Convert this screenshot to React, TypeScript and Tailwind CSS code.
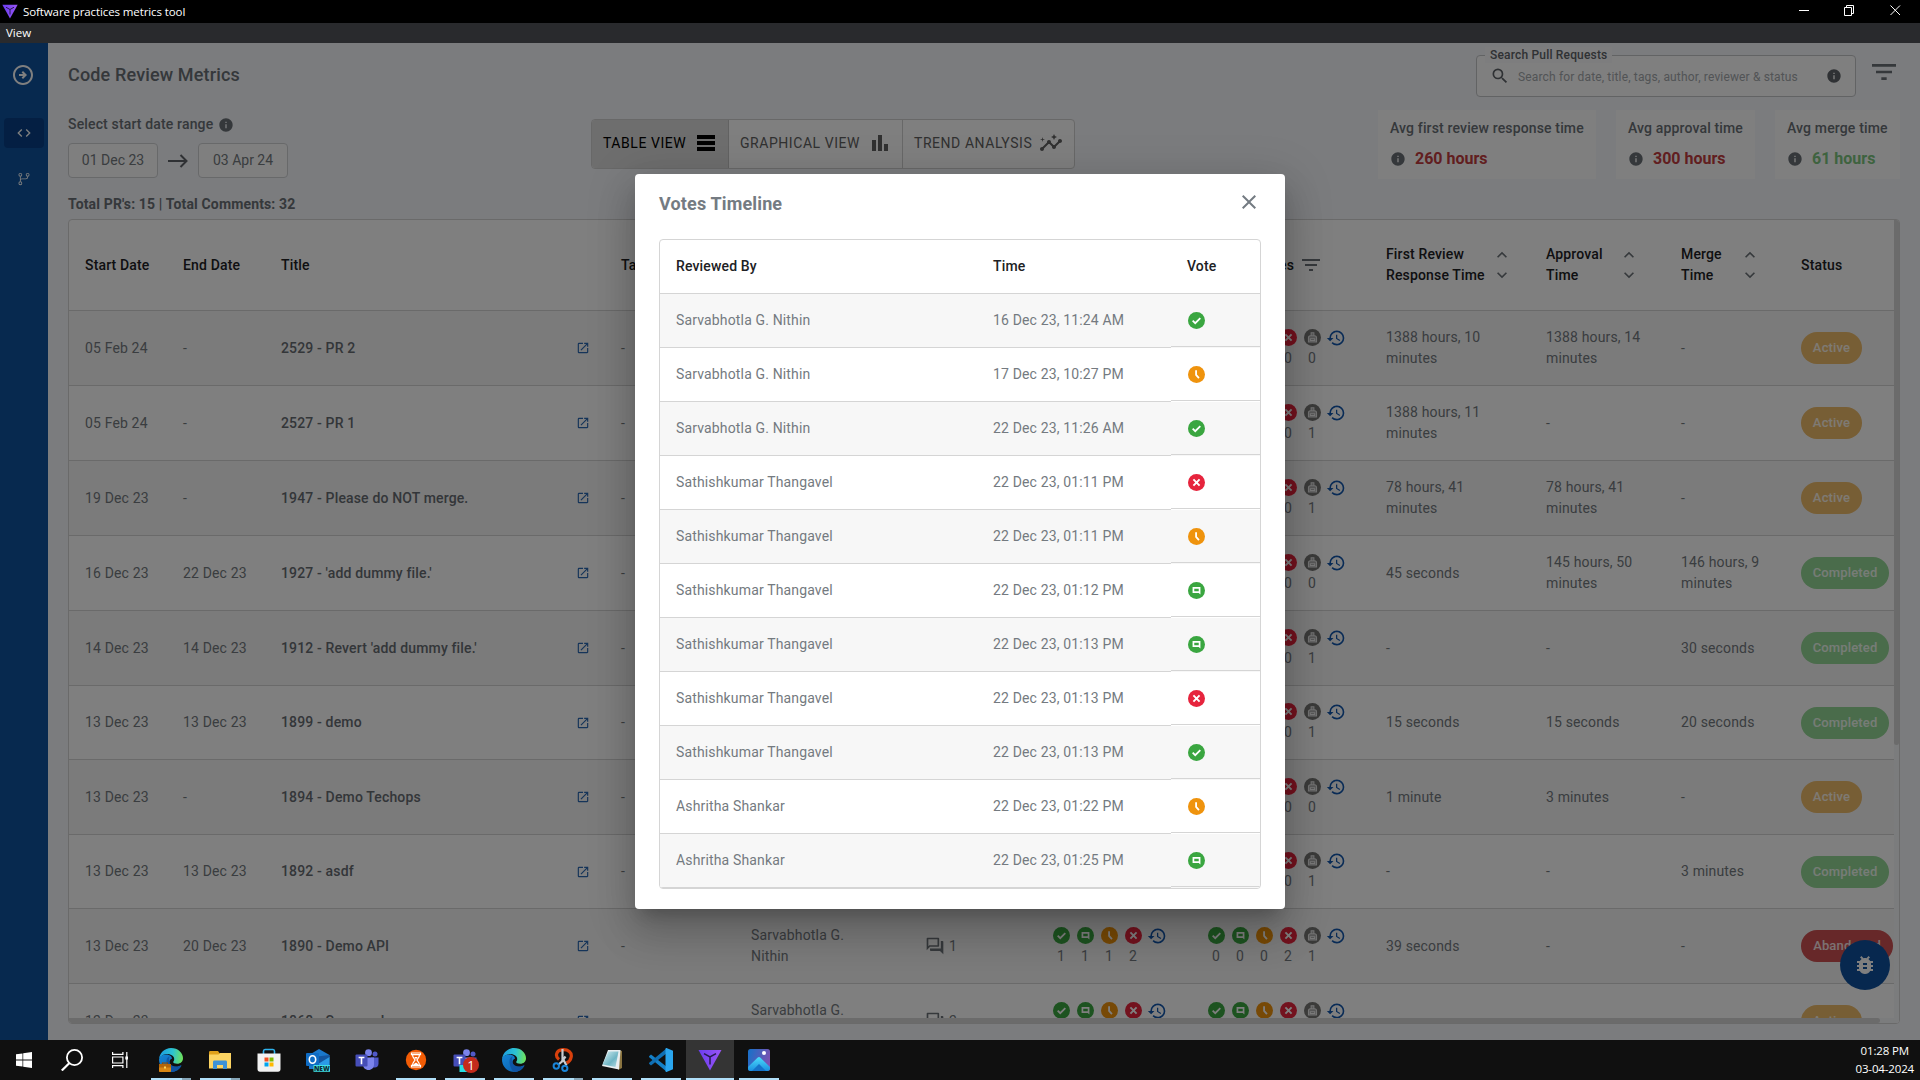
import React from "react";
import {
  MdBarChart,
  MdBugReport,
  MdClose,
  MdCode,
  MdFilterList,
  MdHistory,
  MdInfo,
  MdInsights,
  MdKeyboardArrowDown,
  MdKeyboardArrowUp,
  MdOpenInNew,
  MdOutlineArrowCircleRight,
  MdOutlineForum,
  MdSearch,
  MdTableRows,
} from "react-icons/md";
import { GoGitBranch } from "react-icons/go";

type Vote = "approved" | "suggestion" | "waiting" | "rejected" | "none";

const voteFill: Record<Vote, string> = {
  approved: "#3aa640",
  suggestion: "#3aa640",
  waiting: "#ef930d",
  rejected: "#e6243d",
  none: "#767674",
};

function VoteIcon({ kind, className = "size-4" }: { kind: Vote; className?: string }) {
  return (
    <svg viewBox="0 0 16 16" className={className}>
      <circle cx="8" cy="8" r="8" fill={voteFill[kind]} />
      {kind === "approved" && <path d="M4.4 8.2l2.4 2.4 4.8-4.8" fill="none" stroke="#fff" strokeWidth="1.7" />}
      {kind === "suggestion" && (
        <path fillRule="evenodd" fill="#fff" d="M4.3 4.8h7.400v7l-1.600-1.400H4.300zM5.900 6.300v2.500h4.200V6.300z" />
      )}
      {kind === "waiting" && <path d="M7.6 4v4.4l2.7 3" fill="none" stroke="#fff" strokeWidth="1.7" />}
      {kind === "rejected" && <path d="M5.1 5.1l5.8 5.8m0-5.8l-5.8 5.8" stroke="#fff" strokeWidth="1.8" />}
      {kind === "none" && (
        <g fill="none" stroke="#e8e8e8" strokeWidth="1">
          <path d="M6.700 6V3.500h2.600V6M4.200 12.300V8.300C4.200 7.200 4.900 6.300 6 6.300h4c1.100 0 1.800.9 1.800 2v4z" fill="#b0b0b0" />
          <path d="M5.900 9.300h4.200v1.500H5.900z" fill="#767674" stroke="#f4f4f4" />
        </g>
      )}
    </svg>
  );
}

const votes: [string, string, Vote][] = [
  ["Sarvabhotla G. Nithin", "16 Dec 23, 11:24 AM", "approved"],
  ["Sarvabhotla G. Nithin", "17 Dec 23, 10:27 PM", "waiting"],
  ["Sarvabhotla G. Nithin", "22 Dec 23, 11:26 AM", "approved"],
  ["Sathishkumar Thangavel", "22 Dec 23, 01:11 PM", "rejected"],
  ["Sathishkumar Thangavel", "22 Dec 23, 01:11 PM", "waiting"],
  ["Sathishkumar Thangavel", "22 Dec 23, 01:12 PM", "suggestion"],
  ["Sathishkumar Thangavel", "22 Dec 23, 01:13 PM", "suggestion"],
  ["Sathishkumar Thangavel", "22 Dec 23, 01:13 PM", "rejected"],
  ["Sathishkumar Thangavel", "22 Dec 23, 01:13 PM", "approved"],
  ["Ashritha Shankar", "22 Dec 23, 01:22 PM", "waiting"],
  ["Ashritha Shankar", "22 Dec 23, 01:25 PM", "suggestion"],
];

type Status = "Active" | "Completed" | "Abandoned";

interface PullRequest {
  start: string;
  end: string;
  title: string;
  comments: number;
  required: number[];
  optional: number[];
  first: string;
  approval: string;
  merge: string;
  status: Status;
  height: string;
}

const tall = "h-[75px]";
const short = "h-[74px]";

const rows: PullRequest[] = [
  { start: "05 Feb 24", end: "-", title: "2529 - PR 2", comments: 0, required: [1, 0, 0, 0], optional: [0, 0, 0, 0, 0], first: "1388 hours, 10 minutes", approval: "1388 hours, 14 minutes", merge: "-", status: "Active", height: tall },
  { start: "05 Feb 24", end: "-", title: "2527 - PR 1", comments: 0, required: [1, 0, 0, 0], optional: [0, 0, 0, 0, 1], first: "1388 hours, 11 minutes", approval: "-", merge: "-", status: "Active", height: tall },
  { start: "19 Dec 23", end: "-", title: "1947 - Please do NOT merge.", comments: 0, required: [1, 0, 0, 0], optional: [0, 0, 0, 0, 1], first: "78 hours, 41 minutes", approval: "78 hours, 41 minutes", merge: "-", status: "Active", height: tall },
  { start: "16 Dec 23", end: "22 Dec 23", title: "1927 - 'add dummy file.'", comments: 0, required: [1, 0, 0, 0], optional: [0, 0, 0, 0, 0], first: "45 seconds", approval: "145 hours, 50 minutes", merge: "146 hours, 9 minutes", status: "Completed", height: tall },
  { start: "14 Dec 23", end: "14 Dec 23", title: "1912 - Revert 'add dummy file.'", comments: 0, required: [1, 0, 0, 0], optional: [0, 0, 0, 0, 1], first: "-", approval: "-", merge: "30 seconds", status: "Completed", height: tall },
  { start: "13 Dec 23", end: "13 Dec 23", title: "1899 - demo", comments: 0, required: [1, 0, 0, 0], optional: [0, 0, 0, 0, 1], first: "15 seconds", approval: "15 seconds", merge: "20 seconds", status: "Completed", height: short },
  { start: "13 Dec 23", end: "-", title: "1894 - Demo Techops", comments: 0, required: [1, 0, 0, 0], optional: [0, 0, 0, 0, 0], first: "1 minute", approval: "3 minutes", merge: "-", status: "Active", height: tall },
  { start: "13 Dec 23", end: "13 Dec 23", title: "1892 - asdf", comments: 0, required: [1, 0, 0, 0], optional: [0, 0, 0, 0, 1], first: "-", approval: "-", merge: "3 minutes", status: "Completed", height: short },
  { start: "13 Dec 23", end: "20 Dec 23", title: "1890 - Demo API", comments: 1, required: [1, 1, 1, 2], optional: [0, 0, 0, 2, 1], first: "39 seconds", approval: "-", merge: "-", status: "Abandoned", height: tall },
  { start: "12 Dec 23", end: "-", title: "1868 - Seasonal", comments: 2, required: [1, 1, 1, 2], optional: [0, 0, 0, 2, 1], first: "-", approval: "-", merge: "-", status: "Active", height: tall },
];

const columns =
  "grid grid-cols-[98px_98px_340px_130px_175px_127px_155px_178px_160px_135px_120px_110px] items-center [&>*]:pl-4";

const chip: Record<Status, string> = {
  Active: "w-[61px] bg-[#efbc6a]",
  Completed: "w-[88px] bg-[#95d896]",
  Abandoned: "w-[92px] bg-[#ce5052]",
};

const kinds: Vote[] = ["approved", "suggestion", "waiting", "rejected", "none"];

function VoteCounts({ counts }: { counts: number[] }) {
  return (
    <div className="flex gap-2 pt-px">
      {counts.map((n, i) => (
        <div key={i} className="flex w-4 flex-col items-center">
          <VoteIcon kind={kinds[i]} className="mb-0.5 size-[17px]" />
          <span>{n}</span>
        </div>
      ))}
      <MdHistory className="-ml-0.5 -mt-px size-5 text-[#1257ad]" />
    </div>
  );
}

function SortArrows() {
  return (
    <div className="flex flex-col text-[#6c7378]">
      <MdKeyboardArrowUp className="size-5" />
      <MdKeyboardArrowDown className="size-5" />
    </div>
  );
}

function Stat({ label, value, color, width }: { label: string; value: string; color: string; width: string }) {
  return (
    <div className={`h-[69px] bg-white pl-3 pt-2 ${width}`}>
      <div className="whitespace-nowrap text-sm font-medium leading-5 tracking-[0.15px] text-[#6a7076]">{label}</div>
      <div className="mt-[10px] flex items-center gap-[9px]">
        <MdInfo className="size-4 text-[#6a7076]" />
        <span className={`text-base font-bold leading-[22px] ${color}`}>{value}</span>
      </div>
    </div>
  );
}

function PullRequestTable() {
  return (
    <div className="relative h-[805px] overflow-hidden rounded border border-[#d5d5d5] bg-white text-sm leading-[21px] tracking-[0.15px] text-[#747a80]">
      <div className={`${columns} h-[91px] border-b border-[#d5d5d5] font-medium text-[#202124]`}>
        <div>Start Date</div>
        <div>End Date</div>
        <div>Title</div>
        <div>Tags</div>
        <div>Created By</div>
        <div>Comments</div>
        <div>Votes</div>
        <div className="flex items-center justify-end gap-[5px] pr-[51px]">
          Votes <MdFilterList className="-mr-1 size-6 text-[#6c7378]" />
        </div>
        <div className="flex items-center">
          <span className="w-[106px]">First Review Response Time</span>
          <SortArrows />
        </div>
        <div className="flex items-center">
          <span className="w-[73px]">Approval Time</span>
          <SortArrows />
        </div>
        <div className="flex items-center">
          <span className="w-[59px]">Merge Time</span>
          <SortArrows />
        </div>
        <div>Status</div>
      </div>
      {rows.map((r, i) => (
        <div
          key={r.title}
          className={`${columns} ${r.height} border-b border-[#d5d5d5] ${i % 2 === 0 ? "bg-[#f6f6f6]" : "bg-white"}`}
        >
          <div>{r.start}</div>
          <div>{r.end}</div>
          <div className="flex items-center justify-between pr-[15px] font-medium text-[#676c72]">
            {r.title}
            <MdOpenInNew className="size-[14px] text-[#2a68b2]" />
          </div>
          <div>-</div>
          <div className="pr-16">Sarvabhotla G. Nithin</div>
          <div className="flex items-center gap-1">
            <MdOutlineForum className="-ml-px size-5 text-[#6c7378]" />
            {r.comments}
          </div>
          <VoteCounts counts={r.required} />
          <VoteCounts counts={r.optional} />
          <div className="pr-10">{r.first}</div>
          <div className="pr-4">{r.approval}</div>
          <div className="pr-4">{r.merge}</div>
          <div>
            <div className={`flex h-8 items-center justify-center rounded-full pb-px text-[13px] font-medium text-white/85 ${chip[r.status]}`}>
              {r.status}
            </div>
          </div>
        </div>
      ))}
      <div className="absolute inset-y-0 right-0 w-[5px] bg-[#f7f8fb]">
        <div className="h-[525px] rounded-b bg-[#d6d6d6]" />
      </div>
      <div className="absolute inset-x-0 bottom-0 h-[5px] bg-[#f7f8fb]">
        <div className="h-full w-[1811px] rounded-r bg-[#d6d6d6]" />
      </div>
    </div>
  );
}

function VotesDialog() {
  return (
    <div className="h-[735px] w-[650px] rounded bg-white px-6 shadow-[0_11px_15px_-7px_rgba(0,0,0,0.2),0_24px_38px_3px_rgba(0,0,0,0.14),0_9px_46px_8px_rgba(0,0,0,0.12)]">
      <div className="flex h-[65px] items-start justify-between text-[#747b82]">
        <h2 className="mt-4 text-lg font-bold leading-7 tracking-[0.15px]">Votes Timeline</h2>
        <MdClose className="mt-4 size-6" />
      </div>
      <div className="h-[650px] overflow-hidden rounded border border-[#d5d5d5] text-sm tracking-[0.15px] text-[#747a80]">
        <div className="grid h-[54px] grid-cols-[317px_194px_89px] items-center border-b border-[#d5d5d5] pb-px font-medium text-[#202124]">
          <div className="pl-4">Reviewed By</div>
          <div className="pl-4">Time</div>
          <div className="pl-4">Vote</div>
        </div>
        {votes.map(([name, time, vote], i) => (
          <div key={time + vote} className={`grid h-[54px] grid-cols-[317px_194px_89px] ${i % 2 === 0 ? "bg-[#f7f7f7]" : "bg-white"}`}>
            <div className="flex items-center border-b border-[#d5d5d5] pb-px pl-4">{name}</div>
            <div className="flex items-center border-b border-[#d5d5d5] pb-px pl-4">{time}</div>
            <div className="flex h-[53px] items-center border-b border-[#d5d5d5] pl-[17px]">
              <VoteIcon kind={vote} className="size-[17px]" />
            </div>
          </div>
        ))}
      </div>
    </div>
  );
}

function ToolLogo({ className }: { className: string }) {
  return (
    <svg viewBox="0 0 24 22" className={className}>
      <defs>
        <linearGradient id="tool" x1="0" y1="0" x2="1" y2="0">
          <stop offset="0" stopColor="#6a3df0" />
          <stop offset="1" stopColor="#9a55f5" />
        </linearGradient>
      </defs>
      <path fill="url(#tool)" d="M.5 1h23L12 21.500z" />
      <path d="M6 4.600l6 3.400 6-3.400M12 8v7.500" fill="none" stroke="#241a4d" strokeWidth="1.500" />
    </svg>
  );
}

function EdgeIcon({ work = false }: { work?: boolean }) {
  return (
    <svg viewBox="0 0 24 24" className="size-6">
      <defs>
        <linearGradient id="edgeTop" x1="0" y1="0.4" x2="1" y2="0.5">
          <stop offset="0" stopColor="#1b9de2" />
          <stop offset="0.55" stopColor="#2cc3d2" />
          <stop offset="1" stopColor="#6fe35a" />
        </linearGradient>
        <linearGradient id="edgeLow" x1="0" y1="0" x2="1" y2="1">
          <stop offset="0" stopColor="#1486d8" />
          <stop offset="1" stopColor="#0c59a4" />
        </linearGradient>
      </defs>
      <path fill="url(#edgeLow)" d="M0 11.5C.6 8 4 6.4 7 6.4c3.600 0 6 1.800 6 4.300-1.200.2-2.600 1.500-2.400 3.600.3 3 3.500 4.400 6.600 4.300 2-.1 3.700-.8 4.600-1.300.4-.2.800.2.500.6C20.500 21.500 16.600 24 12 24 5.400 24 0 18.600 0 11.500z" />
      <path fill="url(#edgeTop)" d="M0 11.400C.5 5 5.600 0 12 0c7.200 0 12 5 12 10.200 0 3.400-2.500 5.500-5.700 5.500-2.600 0-4.100-.8-4.100-1.700 0-.7 1-1 1-2.900 0-2.600-3-5-6.800-5C4.600 6.100 1.200 8 0 11.400z" />
      <path fill="#0f4c9c" opacity="0.7" d="M7.500 13c0-2.200 1.300-4 3.200-4.700C9 11 9.500 18 17 18.800c2 .2 3.600-.5 4.800-1-2 3.600-5.500 6.100-9.700 6.100C8.800 21.500 7.500 17 7.500 13z" />
      {work && (
        <g>
          <path d="M3.500 16.500V15h5v1.500" fill="none" stroke="#8a4a05" strokeWidth="1.2" />
          <rect x="0" y="16" width="12" height="8" rx="0.800" fill="#d98613" />
          <path d="M0 16h12v3.500H0z" fill="#b4660a" />
          <rect x="5" y="18.500" width="2" height="2" fill="#ffd45a" />
        </g>
      )}
    </svg>
  );
}

function TeamsIcon({ badge = false }: { badge?: boolean }) {
  return (
    <svg viewBox="0 0 24 24" className="size-6 overflow-visible">
      <circle cx="20" cy="6" r="2.500" fill="#5059c9" />
      <path d="M16 9.500h7.500v6.200c0 2.300-1.500 3.800-3.700 3.800H16z" fill="#5059c9" />
      <circle cx="13.500" cy="4.700" r="3.400" fill="#7b83eb" />
      <path d="M8 9.500h11v7c0 3.200-2.400 5.500-5.500 5.500S8 19.700 8 16.500z" fill="#7b83eb" />
      <rect x="0.500" y="6.500" width="12" height="12" rx="1" fill="#464eb8" />
      <path d="M3.600 9.500h5.800M6.500 9.500v6.800" stroke="#fff" strokeWidth="1.600" />
      {badge && (
        <g>
          <path d="M6.500 17H14v7H6.500z" fill="#27dfe3" />
          <circle cx="18" cy="17" r="8" fill="#c42b1c" />
          <text x="18" y="22" fontSize="13" fill="#fff" textAnchor="middle" fontFamily="Open Sans, sans-serif">
            1
          </text>
        </g>
      )}
    </svg>
  );
}

const taskIcons: { icon: React.ReactNode; state: "idle" | "open" | "stacked" | "active" }[] = [
  { icon: <EdgeIcon work />, state: "stacked" },
  {
    icon: (
      <svg viewBox="0 0 24 24" className="size-6">
        <path d="M1 4.500C1 3.600 1.400 3 2.300 3H10l1.800 2.500V8H1z" fill="#e0a11a" />
        <path d="M1 6.500h9.500L12 5h11v15.500H1z" fill="#fcd462" />
        <path d="M5 21v-7c0-.9.500-1.500 1.500-1.500h11c1 0 1.500.6 1.500 1.500v7h-4v-4H9v4z" fill="#3d92d6" />
      </svg>
    ),
    state: "stacked",
  },
  {
    icon: (
      <svg viewBox="0 0 24 24" className="size-6">
        <path d="M6.500 7V3.200c0-1 .5-1.700 1.500-1.700h8c1 0 1.500.7 1.500 1.700V7" fill="none" stroke="#2eb3ee" strokeWidth="1.600" />
        <path d="M.5 5.500h23V21c0 1.700-.9 2.700-2.500 2.700H3C1.400 23.700.5 22.700.5 21z" fill="#f2f2f2" />
        <path d="M7.500 9.500h4v4h-4z" fill="#f25022" />
        <path d="M12.500 9.500h4v4h-4z" fill="#7fba00" />
        <path d="M7.500 14.500h4v4h-4z" fill="#00a4ef" />
        <path d="M12.500 14.500h4v4h-4z" fill="#ffb900" />
      </svg>
    ),
    state: "idle",
  },
  {
    icon: (
      <svg viewBox="0 0 24 24" className="size-6">
        <path d="M3 7l10-6 10.500 6v14H3z" fill="#1a78cc" />
        <path d="M7 9l16.500-2v3L12 17z" fill="#1355a0" />
        <path d="M12 16l11.500-7v12.500H8z" fill="#2b9be6" />
        <rect x="0" y="5" width="13" height="13" rx="1" fill="#0f6cc4" />
        <ellipse cx="6.500" cy="11.500" rx="3.200" ry="3.700" fill="none" stroke="#fff" strokeWidth="1.600" />
        <rect x="7.500" y="17" width="16.500" height="6.800" fill="#3fe0e6" />
        <text x="15.800" y="22.700" fontSize="6.500" fontWeight="800" fill="#0d2b33" textAnchor="middle" fontFamily="Open Sans, sans-serif">
          NEW
        </text>
      </svg>
    ),
    state: "idle",
  },
  { icon: <TeamsIcon />, state: "idle" },
  {
    icon: (
      <svg viewBox="0 0 24 24" className="size-6">
        <circle cx="12" cy="12" r="10.200" fill="#f25c05" />
        <path d="M7.500 5h9v1.600h-9zM7.500 17.400h9V19h-9zM8.500 6.500c0 3.500 2 4 2.500 5.500-.5 1.500-2.500 2-2.500 5.500M15.500 6.500c0 3.500-2 4-2.500 5.500.5 1.500 2.500 2 2.500 5.500" fill="none" stroke="#fff" strokeWidth="1.200" />
        <path d="M9.200 17.500c.3-1.700 1.500-2 2.800-3 1.300 1 2.500 1.300 2.800 3zM10.200 9h3.600L12 11.300z" fill="#fff" />
      </svg>
    ),
    state: "open",
  },
  { icon: <TeamsIcon badge />, state: "open" },
  { icon: <EdgeIcon />, state: "open" },
  {
    icon: (
      <svg viewBox="0 0 24 24" className="ml-0.5 size-6">
        <path d="M7 11.500C2.500 8 4.500 2.500 9.500 1.800c7-.8 10.500 3 9.700 7.200-.5 3-2.500 5-4.700 6" fill="none" stroke="#d8400c" strokeWidth="3.200" />
        <path d="M10.500 1v12l-4.500 4M10.500 10l4 7.500M13.500 8.500L9.500 14" fill="none" stroke="#c9ccd0" strokeWidth="2.200" />
        <circle cx="4.300" cy="18" r="2.700" fill="none" stroke="#1a85d8" strokeWidth="2" />
        <circle cx="12.800" cy="20.300" r="2.600" fill="none" stroke="#1a85d8" strokeWidth="2" />
      </svg>
    ),
    state: "stacked",
  },
  {
    icon: (
      <svg viewBox="0 0 24 24" className="size-6">
        <defs>
          <linearGradient id="note" x1="0" y1="0" x2="1" y2="1">
            <stop offset="0" stopColor="#d8f1f5" />
            <stop offset="0.600" stopColor="#6fb5c4" />
            <stop offset="1" stopColor="#b9dfe6" />
          </linearGradient>
        </defs>
        <path d="M19 2l3 1v17l-4 2z" fill="#8a7440" />
        <path d="M8 2h12.500L19 21.500 2 18z" fill="#e8eef0" />
        <path d="M8.500 3.500h10L15.500 19 2.500 16.500z" fill="url(#note)" />
      </svg>
    ),
    state: "open",
  },
  {
    icon: (
      <svg viewBox="0 0 24 24" className="size-6">
        <path d="M0 8.200L2 6.600 18 19v5L.2 9.200z" fill="#1480c8" />
        <path d="M0 15.800l2 1.600L18 5V0L.2 14.800z" fill="#0f6fb4" />
        <path d="M17.500 0L24 2.800v18.400L17.500 24c-.6 0-1-.4-1-1V1c0-.6.4-1 1-1z" fill="#2aa5ee" />
      </svg>
    ),
    state: "open",
  },
  { icon: <ToolLogo className="h-[22px] w-6" />, state: "active" },
  {
    icon: (
      <svg viewBox="0 0 24 24" className="size-6">
        <defs>
          <linearGradient id="sky" x1="0" y1="0.300" x2="1" y2="0.600">
            <stop offset="0" stopColor="#1c6fc8" />
            <stop offset="1" stopColor="#8050b0" />
          </linearGradient>
          <linearGradient id="hill" x1="0" y1="0" x2="0" y2="1">
            <stop offset="0" stopColor="#4bdcfb" />
            <stop offset="1" stopColor="#1b8fe0" />
          </linearGradient>
        </defs>
        <rect x="1" y="1" width="22" height="22" rx="2.500" fill="url(#sky)" />
        <path d="M1 19L10.500 9.700c1-1 2-1 3 0L23 19v1.500c0 1.600-.9 2.500-2.500 2.500h-17C1.900 23 1 22.100 1 20.500z" fill="url(#hill)" />
        <path d="M5 23l7-7 7 7z" fill="#1573c9" />
        <circle cx="17" cy="5" r="2" fill="#fff" />
      </svg>
    ),
    state: "open",
  },
];

function Taskbar() {
  return (
    <footer className="flex h-10 bg-[#101010]">
      <div className="flex w-12 items-center justify-center">
        <svg viewBox="0 0 16 16" className="size-4" fill="#fff">
          <path d="M0 2.300l6.500-.9v6.200H0zM7.200 1.300L16 0v7.600H7.200zM0 8.400h6.500v6.200L0 13.700zM7.200 8.400H16V16l-8.800-1.200z" />
        </svg>
      </div>
      <div className="flex w-12 items-center justify-center">
        <svg viewBox="0 0 22 22" className="size-[22px]" fill="none" stroke="#fff" strokeWidth="1.800">
          <circle cx="13.500" cy="8.500" r="7.600" />
          <path d="M8.200 14.200L.8 21.500" strokeWidth="2.200" />
        </svg>
      </div>
      <div className="flex w-12 items-center justify-center">
        <svg viewBox="0 0 16 16" className="size-4" fill="none" stroke="#fff" strokeWidth="1.200">
          <path d="M.6 5h10.300v6H.6zM.6 0v2.400h10.300V0M.6 16v-2.400h10.300V16M14.800 0v16" />
          <path d="M13.300 4.500h3v3h-3z" fill="#fff" stroke="none" />
        </svg>
      </div>
      <div className="ml-[3px] flex gap-px">
        {taskIcons.map(({ icon, state }, i) => (
          <div key={i} className={`flex w-12 flex-col items-center ${state === "active" ? "bg-[#343434]" : ""}`}>
            <div className="flex h-[38px] items-center pt-0.5">{icon}</div>
            {state === "active" && <div className="h-0.5 w-12 bg-[#b0dff8]" />}
            {state === "open" && <div className="h-0.5 w-10 bg-[#b0dff8]" />}
            {state === "stacked" && (
              <div className="flex h-0.5 w-10">
                <div className="w-[31px] bg-[#b0dff8]" />
                <div className="w-[9px] bg-[#86a6b8]" />
              </div>
            )}
          </div>
        ))}
      </div>
      <div className="ml-auto mr-[6px] flex flex-col items-center pt-0.5 font-['Open_Sans',sans-serif] text-[11.500px] leading-[18px] tracking-[-0.15px] text-white">
        <span>01:28 PM</span>
        <span>03-04-2024</span>
      </div>
    </footer>
  );
}

export default function App() {
  return (
    <div className="flex h-[1080px] w-[1920px] flex-col overflow-hidden font-[Roboto,sans-serif]">
      <div className="flex h-[23px] items-center bg-black pl-[2px] font-['Open_Sans',sans-serif] text-[11.500px] text-white">
        <ToolLogo className="h-[15px] w-4" />
        <span className="ml-[5px] tracking-[-0.1px]">Software practices metrics tool</span>
        <svg viewBox="0 0 102 12" className="mb-[3px] ml-auto mr-[19px] h-3 w-[102px]" fill="none" stroke="#fff">
          <path d="M0 6.500h10M45.500 3.500h7v8h-7zM47.500 3.500v-2h7v8h-2M91.500 1.500l9.500 9.500m0-9.500l-9.500 9.500" />
        </svg>
      </div>
      <div className="flex h-5 items-center bg-[#292a2d] pl-[6px] font-['Open_Sans',sans-serif] text-[11.500px] text-white">
        View
      </div>

      <div className="relative flex h-[997px] bg-[#f6f8fc]">
        <nav className="flex w-12 flex-col items-center bg-[#0f539f] text-white">
          <MdOutlineArrowCircleRight className="mr-0.5 mt-5 size-6" />
          <div className="mt-[31px] flex h-[30px] w-10 items-center justify-center rounded bg-[#083f87]">
            <MdCode className="size-4" />
          </div>
          <GoGitBranch className="mt-6 size-[14px]" />
        </nav>

        <main className="flex flex-1 flex-col pl-5 pr-5">
          <header className="flex h-[67px] items-start">
            <h1 className="mt-[18px] text-lg font-medium leading-7 tracking-[0.15px] text-[#6a7076]">Code Review Metrics</h1>
            <div className="relative ml-auto mt-3 flex h-[42px] w-[380px] items-center rounded border border-[#c4c6c9] bg-white px-[13px] text-[#5f6368]">
              <span className="absolute -top-[9px] left-2 bg-[#fafbfd] px-[5px] text-xs font-medium leading-4 tracking-[0.18px] text-[#5f6368]">
                Search Pull Requests
              </span>
              <MdSearch className="size-5" />
              <span className="ml-2 pt-0.5 text-xs tracking-[0.15px] text-[#a4a8ac]">
                Search for date, title, tags, author, reviewer &amp; status
              </span>
              <MdInfo className="ml-auto size-4" />
            </div>
            <MdFilterList className="ml-3 mt-[13px] size-8 text-[#6a7076]" />
          </header>

          <section className="flex h-[69px] items-start">
            <div className="w-[523px] pt-1">
              <div className="flex items-center gap-[5px] text-sm font-medium leading-5 tracking-[0.15px] text-[#6a7076]">
                Select start date range <MdInfo className="mt-px size-4" />
              </div>
              <div className="mt-[9px] flex items-center text-sm text-[#747a80]">
                <div className="flex h-[35px] w-[90px] items-center justify-center rounded border border-[#d0d2d5] bg-white pb-px">01 Dec 23</div>
                <svg viewBox="0 0 20 14" className="mx-[10px] h-[14px] w-5" fill="none" stroke="#5f6368" strokeWidth="2">
                  <path d="M0 7h18.500M12.500 1l6 6-6 6" />
                </svg>
                <div className="flex h-[35px] w-[90px] items-center justify-center rounded border border-[#d0d2d5] bg-white pb-px">03 Apr 24</div>
              </div>
            </div>
            <div className="mt-[9px] flex h-[50px] w-[484px] overflow-hidden rounded border border-[#d0d0d0] bg-white text-sm tracking-[0.55px] text-[#626262]">
              <div className="flex w-[137px] items-center justify-between border-r border-[#c4c4c4] bg-[#dcdcdc] pb-0.5 pl-[11px] pr-[10px] text-black">
                TABLE VIEW <MdTableRows className="size-6" />
              </div>
              <div className="flex w-[174px] items-center justify-between border-r border-[#d0d0d0] pb-0.5 pl-[11px] pr-[10px]">
                GRAPHICAL VIEW <MdBarChart className="size-6" />
              </div>
              <div className="flex flex-1 items-center justify-between pb-0.5 pl-[11px] pr-[11px]">
                TREND ANALYSIS <MdInsights className="size-6" />
              </div>
            </div>
            <div className="ml-auto flex gap-5">
              <Stat label="Avg first review response time" value="260 hours" color="text-[#c33c40]" width="w-[218px]" />
              <Stat label="Avg approval time" value="300 hours" color="text-[#c33c40]" width="w-[139px]" />
              <Stat label="Avg merge time" value="61 hours" color="text-[#7cc67e]" width="w-[125px]" />
            </div>
          </section>

          <div className="h-10 pt-[15px] text-sm font-bold leading-5 tracking-[0.15px] text-[#6a7076]">
            Total PR's: 15 | Total Comments: 32
          </div>
          <PullRequestTable />
        </main>

        <div className="absolute bottom-[50px] right-[30px] flex size-[50px] items-center justify-center rounded-full bg-[#0f519f] text-white">
          <MdBugReport className="size-6" />
        </div>
        <div className="absolute inset-0 flex items-center justify-center bg-black/50">
          <VotesDialog />
        </div>
      </div>
      <Taskbar />
    </div>
  );
}
